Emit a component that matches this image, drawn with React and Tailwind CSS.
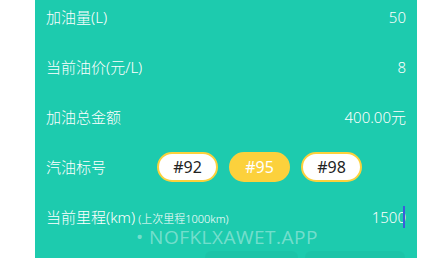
import React from "react";

const font = { fontFamily: '"Noto Sans", "Noto Sans CJK SC", sans-serif' };

function Row({ label, right }) {
    return (
        <div className="h-[50px] flex items-center justify-between">
            <div className="flex items-baseline">{label}</div>
            {right}
        </div>
    );
}

export default function App() {
    const grades = ["#92", "#95", "#98"];
    const active = "#95";

    return (
        <div className="w-[445px] h-[258px] bg-white overflow-hidden relative font-light" style={font}>
            <div className="ml-[35px] w-[382px] h-[280px] bg-[#1dcbae] px-[11px] -mt-[8px] text-white">
                <Row label={<span className="text-[15px]">加油量(L)</span>} right={<span className="text-[15px]">50</span>} />
                <Row label={<span className="text-[15px]">当前油价(元/L)</span>} right={<span className="text-[15px]">8</span>} />
                <Row label={<span className="text-[15px]">加油总金额</span>} right={<span className="text-[15px]">400.00元</span>} />
                <div className="h-[50px] flex items-center">
                    <span className="text-[15px] w-[111px]">汽油标号</span>
                    <div className="flex gap-[11px]">
                        {grades.map(g => (
                            <div
                                key={g}
                                className={`w-[61px] h-[30px] rounded-full border-2 border-[#fcd13c] flex items-center justify-center text-[16px] font-normal ${g === active ? "bg-[#fcd13c] text-white" : "bg-white text-[#222]"}`}
                            >
                                {g}
                            </div>
                        ))}
                    </div>
                </div>
                <Row
                    label={
                        <>
                            <span className="text-[15px]">当前里程(km)</span>
                            <span className="text-[11px] ml-[3px]">(上次里程1000km)</span>
                        </>
                    }
                    right={
                        <span className="text-[15px] flex items-center">
                            150<span className="relative">0<span className="absolute right-[1px] top-[0px] w-[2px] h-[22px] bg-[#3b5bdb]"></span></span>
                        </span>
                    }
                />
            </div>
            <div className="absolute left-[136px] top-[223px] text-[19px] font-normal text-white/40 tracking-[0.5px]" style={{ fontFamily: '"Open Sans", sans-serif' }}>
                • NOFKLXAWET.APP
            </div>
            <div className="absolute left-[205px] top-[251px] w-[93px] h-[10px] rounded-t-[6px] bg-black/[0.03]"></div>
            <div className="absolute left-[305px] top-[251px] w-[100px] h-[10px] rounded-t-[6px] bg-black/[0.03]"></div>
        </div>
    );
}
